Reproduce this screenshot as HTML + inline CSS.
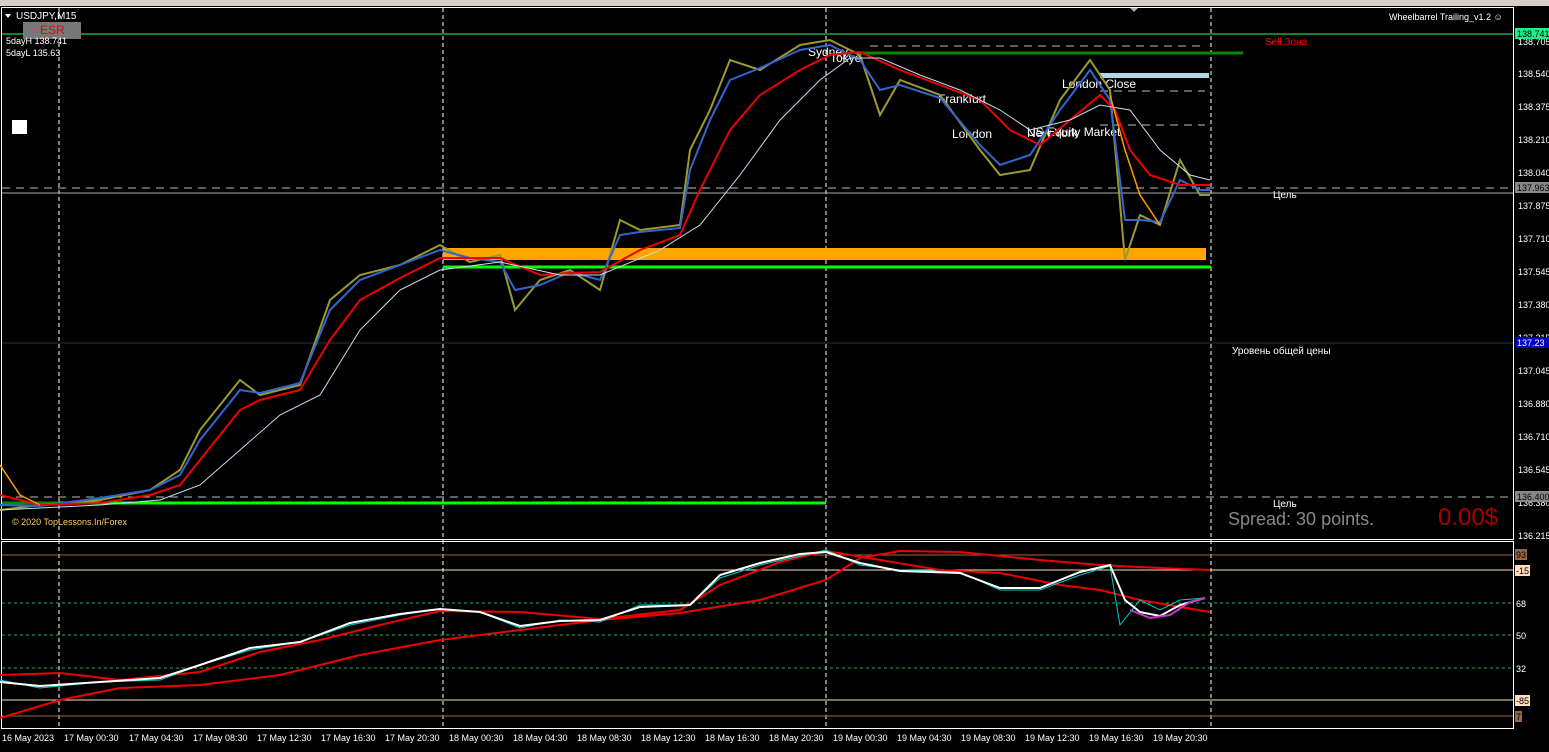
<!DOCTYPE html><html><head><meta charset="utf-8"><style>
body{margin:0;background:#000;width:1549px;height:747px;overflow:hidden;font-family:"Liberation Sans",sans-serif}
svg text{font-family:"Liberation Sans",sans-serif}
</style></head><body>
<svg width="1549" height="747" xmlns="http://www.w3.org/2000/svg">
<rect width="1549" height="747" fill="#000"/>
<rect x="0" y="0" width="1549" height="6" fill="#d4d0c8"/>
<polygon points="1129,7 1139,7 1134,12" fill="#aaa"/>
<rect x="1.5" y="7.5" width="1512" height="532" fill="none" stroke="#fff"/>
<rect x="1.5" y="541.5" width="1512" height="187" fill="none" stroke="#fff"/>
<g stroke="#fff" stroke-dasharray="4,3" stroke-width="1">
<line x1="59" y1="8" x2="59" y2="728"/><line x1="443" y1="8" x2="443" y2="728"/><line x1="826" y1="8" x2="826" y2="728"/><line x1="1211" y1="8" x2="1211" y2="728"/>
</g>
<line x1="2" y1="34" x2="1513" y2="34" stroke="#2f6"/>
<rect x="23" y="22" width="58" height="17" fill="#777"/><text x="40" y="34" fill="#e00" font-size="12">ESR</text>
<polygon points="5,14 11,14 8,18" fill="#fff"/>
<text x="16" y="19" fill="#fff" font-size="10">USDJPY,M15</text>
<text x="6" y="44" fill="#fff" font-size="9">5dayH 138.741</text>
<text x="6" y="56" fill="#fff" font-size="9">5dayL 135.63</text>
<rect x="12" y="120" width="15" height="14" fill="#fff"/>
<text x="1389" y="20" fill="#fff" font-size="9">Wheelbarrel Trailing_v1.2 ☺</text>
<line x1="860" y1="53" x2="1243" y2="53" stroke="#080" stroke-width="3"/>
<text x="1265" y="45" fill="#f00" font-size="10">Sell Зона</text>
<g stroke="#bbb" stroke-dasharray="8,6"><line x1="2" y1="188" x2="1513" y2="188"/><line x1="2" y1="497" x2="1513" y2="497"/><line x1="870" y1="46" x2="1205" y2="46"/><line x1="1100" y1="91" x2="1205" y2="91"/><line x1="1100" y1="125" x2="1205" y2="125"/></g>
<line x1="2" y1="193" x2="1513" y2="193" stroke="#aaa"/>
<line x1="2" y1="343" x2="1513" y2="343" stroke="#333"/>
<rect x="1100" y="73" width="109" height="5" fill="#add8e6"/>
<rect x="443" y="248" width="763" height="12" fill="#ffa500"/>
<line x1="443" y1="267" x2="1211" y2="267" stroke="#0f0" stroke-width="3"/>
<line x1="59" y1="503" x2="826" y2="503" stroke="#0f0" stroke-width="3"/>
<line x1="2" y1="503" x2="59" y2="503" stroke="#080" stroke-width="3"/>
<text x="1273" y="198" fill="#fff" font-size="10">Цель</text>
<text x="1273" y="507" fill="#fff" font-size="10">Цель</text>
<text x="1232" y="354" fill="#fff" font-size="10">Уровень общей цены</text>
<text x="1228" y="525" fill="#888" font-size="18">Spread: 30 points.</text>
<text x="1438" y="525" fill="#a00" font-size="24">0.00$</text>
<text x="12" y="525" fill="#fc6" font-size="9">© 2020 TopLessons.In/Forex</text>
<g fill="#fff" font-size="12"><text x="808" y="56">Sydney</text><text x="830" y="62">Tokyo</text><text x="938" y="103">Frankfurt</text><text x="952" y="138">London</text><text x="1062" y="88">London Close</text><text x="1027" y="137">New York</text><text x="1027" y="136">US Equity Market</text></g>
<polyline fill="none" stroke="#9a9a30" stroke-width="2" points="0,510 40,505 100,500 150,490 180,470 200,430 240,380 260,395 300,385 330,300 360,275 400,265 440,245 470,262 500,255 515,310 540,280 570,270 600,290 620,220 640,230 680,225 690,150 710,110 730,60 760,70 800,45 830,40 860,55 880,115 900,80 940,95 980,150 1000,175 1030,170 1060,100 1090,60 1110,90 1125,260 1140,215 1160,225 1180,160 1200,195 1210,195"/>
<polyline fill="none" stroke="#36c" stroke-width="2" points="0,505 40,506 100,498 150,490 180,475 200,440 240,390 260,393 300,383 330,310 360,280 400,265 440,250 470,258 500,262 515,290 540,285 570,272 600,280 620,235 640,232 680,228 690,170 710,120 730,80 760,68 800,50 830,45 860,60 880,90 900,85 940,98 980,145 1000,165 1030,155 1060,110 1090,70 1110,100 1125,220 1140,220 1160,222 1180,180 1200,190 1210,190"/>
<polyline fill="none" stroke="#e00" stroke-width="2" points="0,495 40,505 100,503 150,495 180,485 200,460 240,410 260,400 300,390 330,340 360,300 400,278 440,258 470,258 500,258 540,275 570,273 600,272 640,250 680,235 700,190 730,130 760,95 800,70 830,55 860,52 900,70 940,85 980,100 1010,130 1040,145 1070,120 1100,95 1115,110 1130,150 1150,175 1180,185 1210,185"/>
<polyline fill="none" stroke="#cde" stroke-width="1" points="0,510 100,505 160,500 200,485 240,450 280,415 320,395 360,330 400,290 440,270 500,262 560,275 600,275 660,250 700,225 740,175 780,120 820,80 850,58 880,58 920,75 960,90 1000,110 1030,130 1070,120 1100,105 1130,110 1160,150 1190,175 1210,180"/>
<polyline fill="none" stroke="#f90" stroke-width="1.5" points="0,465 20,495 40,505"/>
<polyline fill="none" stroke="#f90" stroke-width="1.5" points="1110,95 1125,150 1140,195 1160,225"/>
<g stroke="#964" ><line x1="2" y1="555" x2="1513" y2="555"/><line x1="2" y1="716" x2="1513" y2="716"/></g>
<g stroke="#fdb"><line x1="2" y1="570" x2="1513" y2="570"/><line x1="2" y1="700" x2="1513" y2="700"/></g>
<g stroke="#2a6" stroke-dasharray="3,3"><line x1="2" y1="603" x2="1513" y2="603"/><line x1="2" y1="635" x2="1513" y2="635"/><line x1="2" y1="668" x2="1513" y2="668"/></g>
<polyline fill="none" stroke="#e00" stroke-width="2" points="0,718 60,700 120,688 200,685 280,675 360,655 440,640 520,630 600,620 680,613 760,600 826,580 860,558 900,551 960,552 1040,560 1100,565 1160,568 1210,570"/>
<polyline fill="none" stroke="#e00" stroke-width="2" points="0,675 60,673 120,680 200,672 260,652 320,640 380,625 440,611 520,612 600,619 680,610 720,585 780,562 826,551 880,560 940,570 1000,573 1060,585 1100,590 1140,600 1180,607 1210,612"/>
<polyline fill="none" stroke="#0cc" stroke-width="1" points="0,680 40,688 100,682 160,680 200,665 250,650 300,642 350,625 400,615 440,609 480,612 520,628 560,620 600,622 640,605 690,605 720,578 760,565 800,556 826,550 860,565 900,570 960,572 1000,590 1040,590 1080,575 1110,566 1120,625 1140,600 1160,610 1180,600 1205,598"/>
<polyline fill="none" stroke="#fff" stroke-width="2" points="0,682 40,686 100,682 160,678 200,665 250,648 300,642 350,623 400,614 440,609 480,612 520,626 560,621 600,620 640,607 690,605 720,575 760,563 800,554 826,552 860,563 900,571 960,573 1000,588 1040,588 1080,572 1110,565 1125,600 1140,612 1160,616 1180,605 1205,598"/>
<polyline fill="none" stroke="#c3c" stroke-width="2" points="1130,610 1150,618 1170,615 1190,602 1205,598"/>
<g fill="#fff" font-size="9">
<text x="1518" y="45">138.705</text><text x="1518" y="77">138.540</text><text x="1518" y="110">138.375</text><text x="1518" y="143">138.210</text><text x="1518" y="176">138.040</text><text x="1518" y="209">137.875</text><text x="1518" y="242">137.710</text><text x="1518" y="275">137.545</text><text x="1518" y="308">137.380</text><text x="1518" y="341">137.215</text><text x="1518" y="374">137.045</text><text x="1518" y="407">136.880</text><text x="1518" y="440">136.710</text><text x="1518" y="473">136.545</text><text x="1518" y="506">136.380</text><text x="1518" y="539">136.215</text>
<text x="1516" y="607">68</text><text x="1516" y="639">50</text><text x="1516" y="672">32</text>
</g>
<rect x="1515" y="28" width="34" height="11" fill="#2e8"/><text x="1517" y="37" font-size="9" fill="#000">138.741</text>
<rect x="1515" y="182" width="34" height="11" fill="#888"/><text x="1517" y="191" font-size="9" fill="#000">137.963</text>
<rect x="1515" y="337" width="34" height="11" fill="#00c"/><text x="1517" y="346" font-size="9" fill="#fff">137.23</text>
<rect x="1515" y="491" width="34" height="11" fill="#888"/><text x="1517" y="500" font-size="9" fill="#000">136.400</text>
<rect x="1515" y="549" width="12" height="11" fill="#964"/><text x="1516" y="558" font-size="9" fill="#000">93</text>
<rect x="1515" y="565" width="15" height="11" fill="#fdb"/><text x="1516" y="574" font-size="9" fill="#000">-15</text>
<rect x="1515" y="695" width="15" height="11" fill="#fdb"/><text x="1516" y="704" font-size="9" fill="#000">-85</text>
<rect x="1515" y="711" width="7" height="11" fill="#964"/><text x="1516" y="720" font-size="9" fill="#000">7</text>
<g fill="#fff" font-size="9">
<text x="2" y="741">16 May 2023</text><text x="64" y="741">17 May 00:30</text><text x="129" y="741">17 May 04:30</text><text x="193" y="741">17 May 08:30</text><text x="257" y="741">17 May 12:30</text><text x="321" y="741">17 May 16:30</text><text x="385" y="741">17 May 20:30</text><text x="449" y="741">18 May 00:30</text><text x="513" y="741">18 May 04:30</text><text x="577" y="741">18 May 08:30</text><text x="641" y="741">18 May 12:30</text><text x="705" y="741">18 May 16:30</text><text x="769" y="741">18 May 20:30</text><text x="833" y="741">19 May 00:30</text><text x="897" y="741">19 May 04:30</text><text x="961" y="741">19 May 08:30</text><text x="1025" y="741">19 May 12:30</text><text x="1089" y="741">19 May 16:30</text><text x="1153" y="741">19 May 20:30</text>
</g>
</svg>
</body></html>
